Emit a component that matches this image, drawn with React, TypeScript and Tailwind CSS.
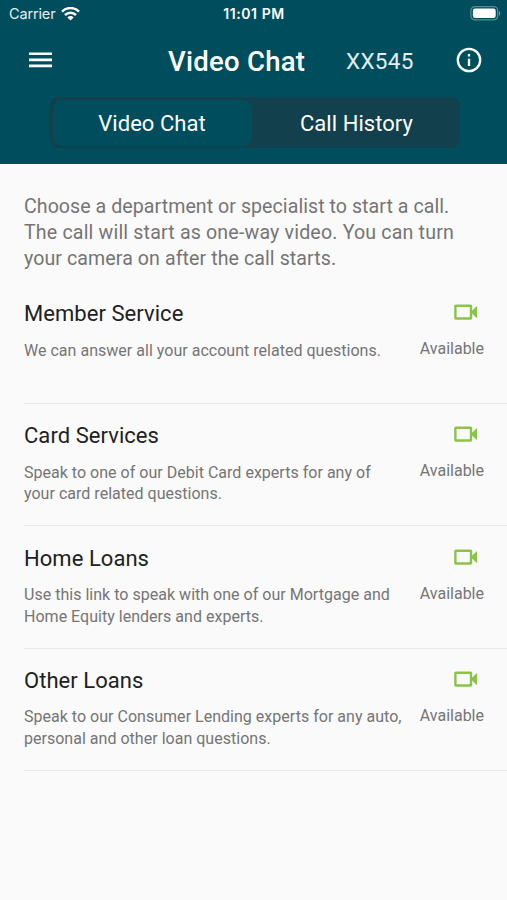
interface Department {
  name: string;
  lines: string[];
}

const DEPARTMENTS: Department[] = [
  { name: "Member Service", lines: ["We can answer all your account related questions."] },
  { name: "Card Services", lines: ["Speak to one of our Debit Card experts for any of", "your card related questions."] },
  { name: "Home Loans", lines: ["Use this link to speak with one of our Mortgage and", "Home Equity lenders and experts."] },
  { name: "Other Loans", lines: ["Speak to our Consumer Lending experts for any auto,", "personal and other loan questions."] },
];

function WifiIcon() {
  return (
    <svg width="19" height="14" viewBox="0 0 19 14" fill="none" stroke="white" strokeWidth="2.5">
      <path d="M1 4.6a12 12 0 0 1 17 0" />
      <path d="M4 8a7.8 7.8 0 0 1 11 0" />
      <path d="M9.5 13.4 6.4 10.4a4.3 4.3 0 0 1 6.2 0z" fill="white" stroke="none" />
    </svg>
  );
}

function BatteryIcon() {
  return (
    <svg width="31" height="15" viewBox="0 0 31 15">
      <rect x="0.9" y="0.6" width="26.8" height="13.3" rx="4" fill="none" stroke="white" strokeOpacity="0.35" strokeWidth="1.2" />
      <rect x="2.9" y="2.6" width="22.8" height="9.4" rx="2.2" fill="white" />
      <path d="M29 5v4.8c1.6-.7 1.6-4.1 0-4.8z" fill="white" fillOpacity="0.45" />
    </svg>
  );
}

function VideoIcon() {
  return (
    <svg width="24" height="16" viewBox="0 0 24 16">
      <rect x="1.4" y="1.7" width="15.6" height="12.8" rx="0.4" fill="none" stroke="#8bc34a" strokeWidth="2.4" />
      <path d="M16.6 8.1 23 1.9v12.4z" fill="#8bc34a" />
    </svg>
  );
}

function StatusBar() {
  return (
    <div className="grid h-[27px] grid-cols-3 items-center pr-[6px] pl-[9px] font-['Inter',sans-serif] text-white">
      <div className="flex items-center gap-[6px]">
        <span className="text-[14.5px] tracking-[-0.15px] text-white/90">Carrier</span>
        <WifiIcon />
      </div>
      <span className="-ml-[2px] text-center text-[14px] font-semibold tracking-[0.6px] whitespace-nowrap">11:01 PM</span>
      <div className="flex justify-end">
        <BatteryIcon />
      </div>
    </div>
  );
}

function DepartmentRow({ name, lines }: Department) {
  return (
    <li className="ml-6 flex h-[122.3px] justify-between border-b-[1.5px] border-[#e9e9e9] pr-[23px]">
      <div className="pt-[18.3px]">
        <h2 className="text-[22px] leading-[28px] tracking-[0.05px] text-[#212121]">{name}</h2>
        <p className="mt-[11.7px] text-[16px] leading-[21.5px] tracking-[0.02px] whitespace-nowrap text-[#757575]">
          {lines.map((line) => (
            <span key={line} className="block">{line}</span>
          ))}
        </p>
      </div>
      <div className="flex flex-col items-end pt-[22.3px]">
        <div className="mr-[6px]">
          <VideoIcon />
        </div>
        <span className="mt-[18px] text-[16px] leading-[21px] text-[#757575]">Available</span>
      </div>
    </li>
  );
}

export default function App() {
  return (
    <div className="flex h-[900px] w-full flex-col overflow-hidden bg-[#fafafa] font-['Roboto',sans-serif]">
      <header className="h-[164px] bg-[#004e5d] text-white">
        <StatusBar />

        <div className="flex h-[66px] items-center pr-[25px] pl-[29px]">
          <svg width="23" height="17" viewBox="0 0 23 17" fill="white">
            <path d="M0 .4h23v2.7H0zM0 6.5h23v2.7H0zM0 12.6h23v2.7H0z" />
          </svg>
          <h1 className="mt-[3px] ml-[116px] w-[178px] text-[27.5px] font-medium tracking-[0.25px] whitespace-nowrap">Video Chat</h1>
          <span className="mt-[3px] text-[22.5px] tracking-[0.3px] text-white/90">XX545</span>
          <svg className="ml-auto" width="26" height="26" viewBox="0 0 26 26" fill="none" stroke="white" strokeWidth="2.3">
            <circle cx="13" cy="13" r="11.2" />
            <path d="M13 11.8v7.2M13 7v2.4" />
          </svg>
        </div>

        {/* segmented tabs */}
        <div className="mt-[4px] ml-[50px] grid h-[51px] w-[410px] grid-cols-[199px_1fr] rounded-[9px] bg-[#12404c] p-[2.5px] text-[22px] tracking-[0.05px]">
          <button className="rounded-[9px] bg-[#004e5d] pt-[2px]">Video Chat</button>
          <button className="pt-[2px] pl-[4px]">Call History</button>
        </div>
      </header>

      <main>
        <p className="mt-[30px] ml-6 text-[19.6px] leading-[26.2px] whitespace-nowrap text-[#757575]">
          <span className="block tracking-[0.05px]">Choose a department or specialist to start a call.</span>
          <span className="block tracking-[0.17px]">The call will start as one-way video. You can turn</span>
          <span className="block tracking-[0.08px]">your camera on after the call starts.</span>
        </p>
        <ul className="mt-[9px]">
          {DEPARTMENTS.map((d) => (
            <DepartmentRow key={d.name} {...d} />
          ))}
        </ul>
      </main>
    </div>
  );
}
